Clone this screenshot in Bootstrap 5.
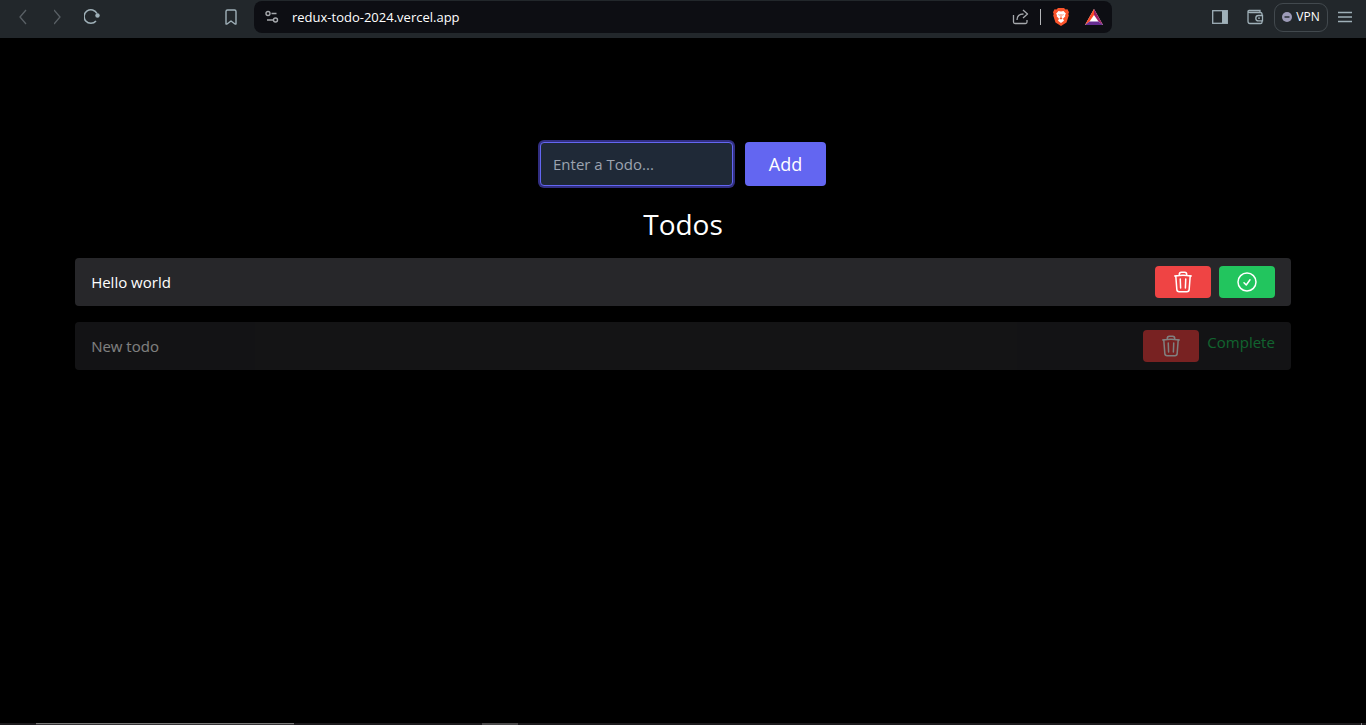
<!DOCTYPE html>
<html lang="en">
<head>
<meta charset="utf-8">
<meta name="viewport" content="width=device-width, initial-scale=1">
<title>Redux Todo</title>
<link href="https://cdn.jsdelivr.net/npm/bootstrap@5.3.0/dist/css/bootstrap.min.css" rel="stylesheet">
<style>
  body { background: #000; color: #fff; font-family: "Open Sans", "Noto Sans", sans-serif; font-size: 15px; line-height: 24px; }
  svg { display: block; flex: none; }
  .browser-bar { height: 38px; padding-bottom: 4px; background: #22272b; color: #9fb0b8; }
  .bar-side { flex: 0 0 254px; }
  .bar-tools { gap: 10px; padding-right: 14px; }
  .icon-btn { padding: 0; border: 0; background: none; color: inherit; }
  .icon-btn:disabled { color: #596065; }
  .address { height: 32px; padding: 0 9px 0 10px; gap: 12px; border-radius: 8px; background: #0d0e13; color: #a6a9ad; }
  .url-field { min-width: 0; padding: 0; border: 0; outline: 0; background: none; color: #fff; font-size: 13px; line-height: 20px; }
  .share-group { gap: 10px; }
  .divider { width: 1px; height: 16px; background: #b4b6b9; }
  .vpn { width: 54px; height: 29px; padding: 0; border: 1px solid #42494e; border-radius: 9px; background: none; color: #fff; font-size: 12px; line-height: 16px; }
  .todo-form { padding-top: 104px; gap: 12px; }
  .todo-input { width: 193px; height: 44px; padding: 4px 12px; border: 1px solid #6366f1; border-radius: 4px; outline: 0; background: #1f2937; color: #f3f4f6; box-shadow: 0 0 0 2px #312e81; }
  .todo-input::placeholder { color: #9ca3af; opacity: 1; }
  .add-btn { width: 81px; height: 44px; border: 0; border-radius: 4px; background: #6366f1; color: #fff; font-size: 18px; line-height: 28px; }
  .todos-title { font-size: 28px; font-weight: 400; line-height: 36px; margin: 20px 0 16px; }
  .todo-list { width: 89%; gap: 16px; }
  .todo-row { padding: 8px 16px; border-radius: 4px; background: #27272a; }
  .todo-text { font-weight: 500; }
  .todo-row.done { opacity: .5; }
  .row-btn { padding: 4px 16px; border: 0; border-radius: 4px; color: #fff; }
  .delete-btn { background: #ef4444; }
  .check-btn { background: #22c55e; }
  .done-label { color: #22c55e; }
  .dock { height: 2px; background: #1c1a1d; }
  .dock-window { width: 258px; margin-left: 36px; background: #343235; border-top: 1px solid #777; }
  .dock-active { width: 36px; margin-left: 188px; background: #494849; }
  .dock-end { width: 1px; margin-right: 4px; background: #777; }
</style>
</head>
<body class="d-flex flex-column min-vh-100">
<svg class="d-none" aria-hidden="true">
  <symbol id="trash" viewBox="0 0 24 24"><path fill="none" stroke="currentColor" stroke-width="1.5" stroke-linecap="round" stroke-linejoin="round" d="m14.74 9-.346 9m-4.788 0L9.26 9m9.968-3.21c.342.052.682.107 1.022.166m-1.022-.165L18.16 19.673a2.25 2.25 0 0 1-2.244 2.077H8.084a2.25 2.25 0 0 1-2.244-2.077L4.772 5.79m14.456 0a48.108 48.108 0 0 0-3.478-.397m-12 .562c.34-.059.68-.114 1.022-.165m0 0a48.11 48.11 0 0 1 3.478-.397m7.5 0v-.916c0-1.18-.91-2.164-2.09-2.201a51.964 51.964 0 0 0-3.32 0c-1.18.037-2.09 1.022-2.09 2.201v.916m7.5 0a48.667 48.667 0 0 0-7.5 0"/></symbol>
</svg>

<header class="browser-bar d-flex align-items-center">
  <div class="bar-side d-flex align-items-center">
    <button class="icon-btn ms-3" disabled aria-label="Back"><svg width="14" height="16" viewBox="0 0 14 16" fill="none" stroke="currentColor" stroke-width="1.3"><path d="M10 1 4 8l6 7"/></svg></button>
    <button class="icon-btn ms-4 me-2" disabled aria-label="Forward"><svg width="14" height="16" viewBox="0 0 14 16" fill="none" stroke="currentColor" stroke-width="1.3"><path d="m0 1 6 7-6 7"/></svg></button>
    <button class="icon-btn ms-2" aria-label="Reload"><svg width="18" height="18" viewBox="2 1 18 18"><path d="M14 14A6.800 6.800 0 1 1 15 6.500" fill="none" stroke="currentColor" stroke-width="1.600"/><circle cx="15.500" cy="8.500" r="2.200" fill="currentColor"/></svg></button>
    <button class="icon-btn ms-auto me-3" aria-label="Bookmark"><svg width="14" height="18" viewBox="0 0 14 18" fill="none" stroke="currentColor" stroke-width="1.4" stroke-linejoin="round"><path d="M2 3.500Q2 2 3.500 2h7Q12 2 12 3.500V16h-1l-4-3-4 3H2z"/></svg></button>
  </div>
  <div class="address d-flex align-items-center flex-grow-1">
    <svg width="16" height="14" viewBox="0 0 16 14" fill="none" stroke="currentColor" stroke-width="1.4"><circle cx="4" cy="3.500" r="2"/><path d="M7.500 3.500h5M3 10h6"/><circle cx="11.500" cy="10" r="2"/></svg>
    <input class="url-field flex-grow-1" type="text" value="redux-todo-2024.vercel.app" aria-label="Address">
    <div class="share-group d-flex align-items-center">
      <button class="icon-btn" aria-label="Share"><svg width="18" height="18" viewBox="0 0 18 18" fill="none" stroke="currentColor" stroke-width="1.3" stroke-linejoin="round"><path d="M1.500 7v7q0 1.500 1.500 1.500h10.500q1.500 0 1.500-1.500v-2M5 12c0-5 3-6 6.500-6M11 2l4.500 4-4.500 4"/></svg></button>
      <span class="divider"></span>
    </div>
    <button class="icon-btn me-1" aria-label="Brave Shields"><svg width="16" height="18" viewBox="0 0 16 18"><path fill="#fb542b" d="m5 0h6l1.500 1.500 2-.2 1.500 3-.7 1.700.5 1.500-2.300 7L8 18l-5.500-3.500L.2 7.500.7 6 0 4.300l1.500-3 2 .2z"/><path fill="#fff" d="m5.500 3 2.500.6 2.500-.6 2.500 2.700-1 1.300.3 1.200-2.300 2.600 1 2L8 15l-3-2.200 1-2-2.300-2.600L4 7 3 5.700z"/><path fill="#fb542b" d="m5 6.200 1.800.5-.4 1zM11 6.200l-1.800.5.4 1zM7.600 6h.8v3.500l1.200 1L8 11.500l-1.600-1 1.200-1z"/></svg></button>
    <button class="icon-btn" aria-label="Rewards"><svg width="18" height="16" viewBox="0 0 18 16"><path d="m9 0 9 16H0z" fill="#fff"/><path fill="#ff4724" d="m9 0v6L4.500 12.500 0 16z"/><path fill="#9e1f63" d="m9 0 9 16-4.500-3.500L9 6z"/><path fill="#662d91" d="M0 16l4.500-3.500h9L18 16z"/></svg></button>
  </div>
  <div class="bar-side bar-tools d-flex align-items-center justify-content-end">
    <button class="icon-btn me-2" aria-label="Sidebar"><svg width="16" height="14" viewBox="0 0 16 14"><rect x=".7" y=".7" width="14.600" height="12.600" fill="none" stroke="currentColor" stroke-width="1.3"/><path d="M10 1h5v12h-5z" fill="currentColor"/></svg></button>
    <button class="icon-btn" aria-label="Wallet"><svg width="18" height="16" viewBox="0 0 18 16" fill="none" stroke="currentColor" stroke-width="1.3"><path d="M16 6V5q0-1.500-1.500-1.500H4Q2 3.500 2 2.200 2 1.500 3 1.500h11v2M2 2.200v10q0 2.300 2 2.300h10.500q1.500 0 1.500-1.300V12M16.500 6.500h-4a2.700 2.700 0 0 0 0 5.400h4zM12 9.200h2"/></svg></button>
    <button class="vpn d-flex align-items-center justify-content-center gap-1"><svg width="10" height="10" viewBox="0 0 10 10"><circle cx="5" cy="5" r="5" fill="#9d9bb8"/><path d="M2.500 5h5" stroke="#22272b" stroke-width="1.400"/></svg>VPN</button>
    <button class="icon-btn" aria-label="Menu"><svg width="14" height="12" viewBox="0 0 14 12" stroke="currentColor" stroke-width="1.3"><path d="M0 1.500h14M0 6h14M0 10.500h14"/></svg></button>
  </div>
</header>

<main class="flex-grow-1 d-flex flex-column align-items-center">
  <form class="todo-form d-flex justify-content-center">
    <input class="todo-input" type="text" placeholder="Enter a Todo..." aria-label="Enter a Todo">
    <button class="add-btn" type="submit">Add</button>
  </form>
  <h1 class="todos-title">Todos</h1>
  <ul class="todo-list list-unstyled d-flex flex-column mb-0">
    <li class="todo-row d-flex justify-content-between align-items-center">
      <span class="todo-text">Hello world</span>
      <div class="d-flex gap-2">
        <button class="row-btn delete-btn" aria-label="Delete"><svg width="24" height="24"><use href="#trash"/></svg></button>
        <button class="row-btn check-btn" aria-label="Mark complete"><svg width="24" height="24" viewBox="0 0 24 24" fill="none" stroke="currentColor" stroke-width="1.5" stroke-linecap="round" stroke-linejoin="round"><path d="M9 12.750 11.250 15 15 9.750M21 12a9 9 0 1 1-18 0 9 9 0 0 1 18 0Z"/></svg></button>
      </div>
    </li>
    <li class="todo-row done d-flex justify-content-between align-items-center">
      <span class="todo-text">New todo</span>
      <div class="d-flex gap-2">
        <button class="row-btn delete-btn" aria-label="Delete"><svg width="24" height="24"><use href="#trash"/></svg></button>
        <span class="done-label">Complete</span>
      </div>
    </li>
  </ul>
</main>

<footer class="dock d-flex" aria-hidden="true">
  <div class="dock-window"></div>
  <div class="dock-active"></div>
  <div class="dock-end ms-auto"></div>
</footer>
<script src="https://cdn.jsdelivr.net/npm/bootstrap@5.3.0/dist/js/bootstrap.bundle.min.js"></script>
</body>
</html>
